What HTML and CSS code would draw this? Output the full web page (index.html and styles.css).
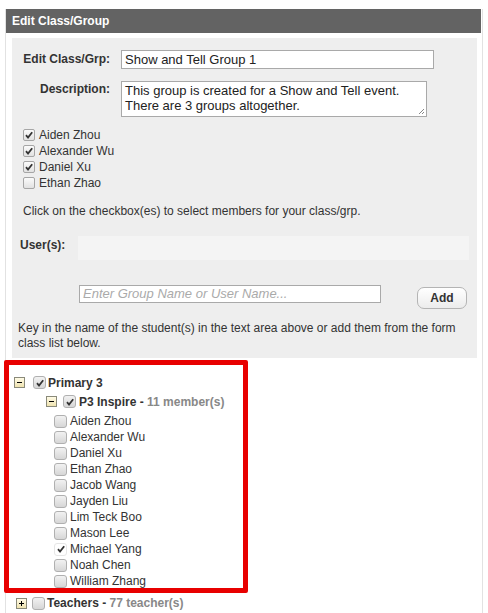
FILE: index.html
```html
<!DOCTYPE html>
<html>
<head>
<meta charset="utf-8">
<link rel="stylesheet" href="styles.css">
</head>
<body>
<div class="box">
  <div class="hdr">Edit Class/Group</div>
  <div class="panel">
    <div class="frow">
      <label class="flabel">Edit Class/Grp:</label>
      <div class="inp">Show and Tell Group 1</div>
    </div>
    <div class="frow r2">
      <label class="flabel">Description:</label>
      <div class="ta">This group is created for a Show and Tell event.<br>There are 3 groups altogether.
        <svg class="grip" width="7" height="7" viewBox="0 0 7 7"><path d="M6 1 L1 6 M6 4 L4 6" stroke="#888" stroke-width="1"/></svg>
      </div>
    </div>
    <ul class="clist">
      <li><span class="cb on"><svg viewBox="0 0 10 10"><path d="M2 5.2 L4 7.5 L8.2 2.2" fill="none" stroke="#333" stroke-width="1.8"/></svg></span>Aiden Zhou</li>
      <li><span class="cb on"><svg viewBox="0 0 10 10"><path d="M2 5.2 L4 7.5 L8.2 2.2" fill="none" stroke="#333" stroke-width="1.8"/></svg></span>Alexander Wu</li>
      <li><span class="cb on"><svg viewBox="0 0 10 10"><path d="M2 5.2 L4 7.5 L8.2 2.2" fill="none" stroke="#333" stroke-width="1.8"/></svg></span>Daniel Xu</li>
      <li><span class="cb"></span>Ethan Zhao</li>
    </ul>
    <p class="instr">Click on the checkbox(es) to select members for your class/grp.</p>
    <div class="urow">
      <label class="ulabel">User(s):</label>
      <div class="ubox"></div>
    </div>
    <div class="arow">
      <div class="ainp">Enter Group Name or User Name...</div>
      <button class="addbtn">Add</button>
    </div>
    <p class="key">Key in the name of the student(s) in the text area above or add them from the form class list below.</p>
  </div>

  <div class="tree">
    <div class="trow l1">
      <span class="tg minus"></span>
      <span class="cb big on"><svg viewBox="0 0 10 10"><path d="M2 5.2 L4 7.5 L8.2 2.2" fill="none" stroke="#333" stroke-width="1.8"/></svg></span>
      <b>Primary 3</b>
    </div>
    <div class="trow l2">
      <span class="tg minus"></span>
      <span class="cb big on"><svg viewBox="0 0 10 10"><path d="M2 5.2 L4 7.5 L8.2 2.2" fill="none" stroke="#333" stroke-width="1.8"/></svg></span>
      <b>P3 Inspire - <span class="cnt">11 member(s)</span></b>
    </div>
    <ul class="members">
      <li><span class="cb big"></span>Aiden Zhou</li>
      <li><span class="cb big"></span>Alexander Wu</li>
      <li><span class="cb big"></span>Daniel Xu</li>
      <li><span class="cb big"></span>Ethan Zhao</li>
      <li><span class="cb big"></span>Jacob Wang</li>
      <li><span class="cb big"></span>Jayden Liu</li>
      <li><span class="cb big"></span>Lim Teck Boo</li>
      <li><span class="cb big"></span>Mason Lee</li>
      <li><span class="cb big plain"><svg viewBox="0 0 10 10"><path d="M2 5.2 L4 7.5 L8.2 2.2" fill="none" stroke="#333" stroke-width="1.8"/></svg></span>Michael Yang</li>
      <li><span class="cb big"></span>Noah Chen</li>
      <li><span class="cb big"></span>William Zhang</li>
    </ul>
    <div class="trow l3">
      <span class="tg plus"></span>
      <span class="cb big"></span>
      <b>Teachers - <span class="cnt">77 teacher(s)</span></b>
    </div>
  </div>
  <div class="hilite"></div>
</div>
</body>
</html>
```

FILE: styles.css
```css
* { box-sizing: border-box; }
body {
  margin: 0;
  padding-top: 9px;
  font-family: "Liberation Sans", Arial, sans-serif;
  font-size: 12px;
  color: #333;
  background: #fff;
}
.box {
  margin-left: 5px;
  width: 478px;
  border-left: 1px solid #e2e2e2;
  border-right: 1px solid #e2e2e2;
  min-height: 610px;
}
.hdr {
  height: 24px;
  line-height: 24px;
  background: #636363;
  color: #fff;
  font-weight: bold;
  padding-left: 6px;
  margin-right: 1px;
}
.panel {
  margin: 5px 5px 0 6px;
  background: #eeeeee;
  padding: 12px 0 7px 0;
}
.frow { display: flex; align-items: flex-start; }
.r2 { margin-top: 12px; }
.flabel {
  width: 98px;
  text-align: right;
  font-weight: bold;
  line-height: 19px;
  margin-right: 11px;
}
.r2 .flabel { line-height: 15px; margin-top: 1px; }
.inp {
  width: 313px;
  height: 19px;
  border: 1px solid #a9a9a9;
  background: #fff;
  padding: 0 3px;
  font-size: 13px;
  line-height: 17px;
  color: #222;
}
.ta {
  position: relative;
  width: 306px;
  height: 36px;
  border: 1px solid #a9a9a9;
  background: #fff;
  padding: 1px 3px;
  font-size: 13px;
  line-height: 15px;
  color: #222;
}
.grip { position: absolute; right: 1px; bottom: 1px; }
.clist {
  list-style: none;
  margin: 10px 0 0 0;
  padding: 0 0 0 11px;
}
.clist li {
  display: flex;
  align-items: center;
  height: 16px;
}
.cb {
  display: inline-flex;
  align-items: center;
  justify-content: center;
  width: 12px;
  height: 12px;
  border: 1px solid #a6a6a6;
  border-radius: 2px;
  background: linear-gradient(#fbfbfb, #e2e2e2);
  margin-right: 4px;
  flex: none;
}
.cb svg { width: 10px; height: 10px; }
.instr {
  margin: 12px 0 0 11px;
  line-height: 16px;
}
.urow {
  display: flex;
  margin-top: 17px;
  align-items: flex-start;
}
.ulabel {
  font-weight: bold;
  width: 66px;
  padding-left: 8px;
  line-height: 18px;
}
.ubox {
  width: 391px;
  height: 24px;
  background: #f4f4f4;
}
.arow {
  display: flex;
  margin-top: 25px;
  padding-left: 67px;
  align-items: flex-start;
  height: 24px;
}
.ainp {
  width: 302px;
  height: 18px;
  border: 1px solid #a9a9a9;
  background: #fff;
  color: #aaa;
  font-style: italic;
  font-size: 13px;
  line-height: 16px;
  padding-left: 3px;
}
.addbtn {
  margin: 2px 0 0 36px;
  width: 50px;
  height: 22px;
  border: 1px solid #b4b4b4;
  border-radius: 7px;
  background: linear-gradient(#ffffff, #ececec);
  font-family: "Liberation Sans", Arial, sans-serif;
  font-size: 12px;
  font-weight: bold;
  color: #333;
  padding: 0;
}
.key {
  margin: 12px 0 0 6px;
  line-height: 15px;
  width: 455px;
}
.tree { margin-top: 15px; }
.trow {
  display: flex;
  align-items: center;
  height: 19px;
}
.tg {
  position: relative;
  width: 11px;
  height: 11px;
  border: 1px solid #8a8a7a;
  background: linear-gradient(#fffbe6, #efe3b0);
  flex: none;
}
.tg::before {
  content: "";
  position: absolute;
  left: 2px;
  top: 4px;
  width: 5px;
  height: 1px;
  background: #000;
}
.tg.plus::after {
  content: "";
  position: absolute;
  left: 4px;
  top: 2px;
  width: 1px;
  height: 5px;
  background: #000;
}
.big { width: 13px; height: 13px; border-color: #b0b0b0; background: linear-gradient(#f2f2f2, #d6d6d6); border-radius: 3px; }
.plain { background: #fff; border-color: #e6e6e6; }
.l1 { padding-left: 8px; }
.l1 .tg { margin-right: 8px; }
.l1 .cb { margin-right: 2px; }
.l2 { padding-left: 40px; }
.l2 .tg { margin-right: 6px; }
.l2 .cb { margin-right: 3px; }
.l3 { padding-left: 10px; margin-top: 6px; height: 16px; }
.l3 .tg { margin-right: 5px; }
.l3 .cb { margin-right: 2px; }
.cnt { color: #888; }
.trow b { font-weight: bold; color: #333; }
.members {
  list-style: none;
  margin: 2px 0 0 0;
  padding: 0 0 0 48px;
}
.members li {
  display: flex;
  align-items: center;
  height: 16px;
}
.members .cb { margin-right: 3px; }
.hilite {
  position: absolute;
  left: 4px;
  top: 360px;
  width: 244px;
  height: 233px;
  border: 5px solid #e80000;
  border-radius: 2px;
  pointer-events: none;
}
```
